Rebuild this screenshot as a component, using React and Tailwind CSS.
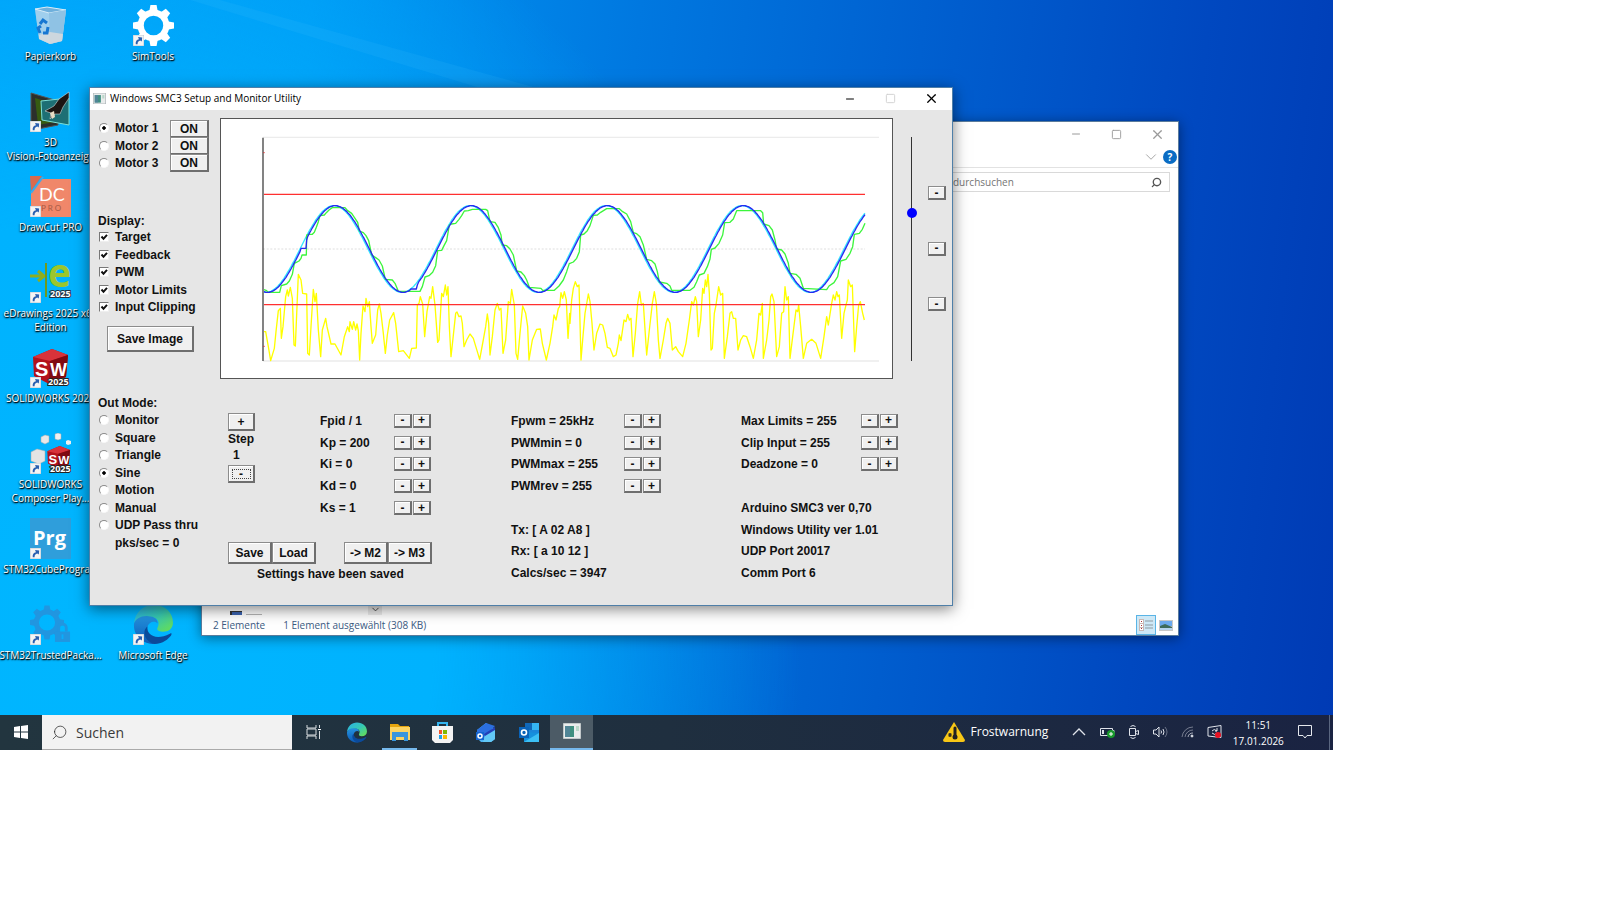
import { useState } from 'react';
import { ChevronDown, Minus, Search, Square, X } from 'lucide-react';

const PERIOD = 408;

// Plot units are thirds of a pixel: x 0..1890, y 0..545
const sinePath = (delay, from, to) => {
  const points = [];
  for (let x = from; x <= to; x += 3) {
    const y = 207 - 130 * Math.cos(((x - delay - 648) / PERIOD) * 2 * Math.PI);
    points.push(`${x},${y.toFixed(0)}`);
  }
  return points.join(' ');
};

const TARGET = sinePath(-3, 27, 1830);
const FEEDBACK = `${sinePath(1, 27, 135)} 138,205 153,205 155,180 ${sinePath(1, 158, 465)} 468,327 484,327 487,315 ${sinePath(1, 492, 1830)}`;

const shift = (points, dx) =>
  points
    .split(' ')
    .map((p) => {
      const [x, y] = p.split(',');
      return `${Number(x) + dx},${y}`;
    })
    .join(' ');

const MOTOR_A =
  '27,329 33,331 40,337 74,337 79,317 95,312 103,303 112,283 118,250 124,247 132,243 138,235 141,225 154,225 155,165 160,163 172,163 178,157 184,142 190,125 195,107 208,105 214,98 222,90 232,83 270,83 278,92 290,100 298,112 308,127 313,153 325,158 333,167 341,182 350,225 362,233 372,240 382,258 391,298 412,300 420,310 430,334 495,334 502,320 510,291 522,287 533,277 542,257 548,212 560,211 567,197 575,182 583,135 590,132 602,130 612,118 620,107 628,93 640,92 652,88 692,88 698,92 705,125 720,127 730,143 738,165 742,195 755,197 765,207 775,225 785,273 798,276 808,287 815,300 823,322 858,325 863,331 898,331 912,318 925,300 935,275 943,250';
const MOTOR_B =
  '0,250 10,246 20,235 28,215 32,165 42,162 52,152 60,137 70,106 82,105 92,97 110,86 148,86 158,95 170,102 182,125 190,158 200,161 210,170 220,195 230,238 245,242 255,252 262,275 268,306 290,310 300,318 305,331 360,331 372,322 380,305 388,285 402,280 412,260 420,237 424,208 435,204 447,190 458,165 464,128 480,127 490,117 500,92 572,92 578,98 581,132 597,137 607,150 615,180 620,207 635,210 645,222 655,250 660,280 678,283 690,295 700,325 770,329 777,318 792,308 803,290 812,243 828,238 840,220 848,200 853,163 868,160 877,148 885,130';
const PWM_A =
  '27,455 32,455 40,500 47,542 58,505 63,455 70,392 76,385 79,475 84,440 92,350 97,330 100,348 106,322 112,355 117,495 121,498 126,380 130,283 138,300 143,340 155,342 158,520 163,525 168,440 175,328 180,365 184,340 190,450 197,530 202,450 212,415 216,440 228,492 240,492 258,525 268,470 278,440 283,455 285,425 292,448 296,425 302,450 306,432 310,452 314,540 318,460 324,378 330,395 333,355 338,380 343,365 348,440 352,490 362,465 368,390 373,372 378,400 385,460 391,520 397,465 404,420 416,398 422,430 431,515 445,512 463,535 470,505 484,504 487,375 492,370 496,350 503,372 509,470 516,395 524,350 528,355 533,320 540,375 548,487 552,480 560,340 565,350 571,315 575,345 579,320 583,440 588,530 594,475 602,400 606,396 612,410 618,408 622,430 627,500 635,480 645,462 655,475 674,538 683,490 692,440 697,402 701,430 705,525 712,470 720,390 727,370 733,390 738,385 744,520 752,480 760,365 766,370 770,328 778,375 783,520 788,538 795,460 803,378 812,400 818,440 822,540 832,480 845,448 856,447 862,490 874,540 885,490 893,440 897,405 903,420 910,385 914,380 918,338 923,355 928,335 934,360 939,475 944,400';
const PWM_B =
  '0,430 5,360 10,325 16,305 22,320 27,315 33,540 38,480 45,400 55,342 60,365 66,430 72,510 80,460 90,432 98,435 105,460 112,502 120,505 130,530 138,525 145,490 148,465 153,482 162,420 168,425 173,403 178,420 183,415 189,530 196,460 203,370 209,335 214,375 220,370 230,525 238,450 247,370 253,335 259,370 265,480 270,535 280,480 288,430 293,415 300,430 307,510 317,500 325,515 338,530 348,490 358,420 365,365 370,375 376,350 380,365 385,470 392,420 398,325 402,340 406,300 410,320 414,283 418,340 423,510 427,505 433,400 438,375 446,320 452,345 458,340 463,535 472,470 480,400 485,395 490,415 497,415 504,510 512,480 520,467 530,470 540,500 550,535 560,480 567,400 572,405 577,370 580,535 590,480 597,420 602,350 606,342 612,365 620,530 628,500 635,400 641,395 645,320 650,360 655,350 660,535 668,470 678,390 683,395 686,375 692,440 700,535 710,490 725,478 738,490 752,535 762,470 770,410 775,435 785,370 790,345 795,360 800,335 804,350 808,345 815,475 822,400 828,375 832,360 835,300 842,320 847,315 854,515 860,440 866,375 871,365 878,400 883,420';

const MOTOR = `${MOTOR_A} ${shift(MOTOR_B, 945)}`;
const PWM = `${PWM_A} ${shift(PWM_B, 945)}`;

const BTN =
  'border border-r-2 border-b-2 border-t-[#8c8c8c] border-l-[#8c8c8c] border-r-[#6e6e6e] border-b-[#6e6e6e] bg-[#f0f0f0] shadow-[inset_1px_1px_0_#ffffff] flex items-center justify-center';

const Chart = () => (
  <svg viewBox="-102 -183 2013 780" className="block w-full" fill="none" strokeLinejoin="round">
    <path d="M24 -128H1872M24 543H1872" stroke="#ececec" strokeWidth="4" />
    <path d="M24 207H1830" stroke="#dedede" strokeWidth="3" strokeDasharray="6 5" />
    <polyline points={PWM} stroke="#ffff00" strokeWidth="4" />
    <path d="M27 43H1830M27 374H1830" stroke="#ff3030" strokeWidth="4" />
    <polyline points={TARGET} stroke="#30e8ff" strokeWidth="4" />
    <polyline points={MOTOR} stroke="#3cf53c" strokeWidth="4" />
    <polyline points={FEEDBACK} stroke="#2828f0" strokeWidth="4" />
    <path d="M24 -127V543" stroke="#444" strokeWidth="4" />
    <path d="M25 -82h4M25 499h4" stroke="#d33" strokeWidth="3" />
  </svg>
);

const ShortcutArrow = () => (
  <svg viewBox="0 0 12 12" className="absolute bottom-0 left-0 w-[11px] h-[11px]">
    <rect width="12" height="12" fill="#f4f4f4" stroke="#b8c4d0" />
    <path d="M3 10C2.6 7 4 5 6.500 4.600L5.500 2.200 10 2.600 9.600 7 8 6C6 6.400 4.800 7.800 5 10z" fill="#2a5fb0" />
  </svg>
);

const RecycleIcon = () => (
  <svg viewBox="0 0 41 41">
    <path d="M5 4l12-2 19 3-4 31-12 3-11-5z" fill="#8fc3e6" opacity=".85" />
    <path d="M5 4l14 4 17-3-4 31-12 3-11-5z" fill="#a9d3ee" opacity=".8" />
    <path d="M5 4l12-2 19 3-17 3z" fill="#6fb0dc" stroke="#d9edf8" />
    <path d="M19 8l1 31 12-3 4-31z" fill="#8fc2e4" />
    <path d="M9 30l11-3 13 2-1 7-12 3-11-5z" fill="#dcdcdc" opacity=".8" />
    <path d="M10 19l3-4 4 3M18 22l-1 6-4 0M10 28l-2-5 3-2" fill="none" stroke="#1677d2" strokeWidth="3" />
  </svg>
);

const Gear = ({ color, className }) => (
  <svg viewBox="0 0 40 40" className={className}>
    <g fill={color}>
      {[0, 45, 90, 135, 180, 225, 270, 315].map((a) => (
        <path key={a} d="M15.500 8L17 0h6l1.500 8z" transform={`rotate(${a} 20 20)`} />
      ))}
    </g>
    <circle cx="20" cy="20" r="12.500" fill="none" stroke={color} strokeWidth="6" />
  </svg>
);

const VisionIcon = () => (
  <svg viewBox="0 0 41 41">
    <path d="M1 2l27 8v24L8 38 1 33z" fill="#2b2f2c" stroke="#555" />
    <path d="M5 7l20 6v18L8 34z" fill="#365b12" />
    <path d="M11 10l28-3v27l-27-5z" fill="#1d6f74" stroke="#7de0d8" />
    <path d="M39 1L29 8l-5 7-9 5 6 2-1 6 5-5 5 0 3-7 6-9z" fill="#1c1512" stroke="#eee" strokeWidth=".5" />
    <path d="M20 22l4-2 1 6-3 2z" fill="#e8dcc4" />
  </svg>
);

const DrawCutIcon = () => (
  <svg viewBox="0 0 41 41">
    <path d="M12 3h29v38H1V16z" fill="#f0876a" />
    <path d="M0 0h12L1 15z" fill="#d96a4e" />
    <path d="M13 1L1 17" stroke="#3fa9e8" strokeWidth="2" />
    <text x="9" y="25" fontSize="18" fill="#fff" fontFamily="Lato">DC</text>
    <text x="11" y="35" fontSize="8" fill="#a55a45" fontFamily="Lato">P R O</text>
  </svg>
);

const EDrawingsIcon = () => (
  <svg viewBox="0 0 41 41" className="overflow-visible">
    <path d="M0 14h12M8 9l6 5-6 5" fill="none" stroke="#8fae1e" strokeWidth="3" />
    <path d="M16 1v34" stroke="#6f9a1c" strokeWidth="2" />
    <text x="18" y="25" fontSize="39" fontWeight="bold" fill="#9cc62c" fontFamily="Open Sans">e</text>
    <text x="20" y="35" fontSize="9" fontWeight="bold" fill="#fff" stroke="#234" strokeWidth="2" paintOrder="stroke" fontFamily="Open Sans">2025</text>
  </svg>
);

const Cube = () => (
  <>
    <path d="M2 8L21 0l16 6-2 22-17 7L3 27z" fill="#b3121b" />
    <path d="M2 8L21 0l16 6-18 6z" fill="#d8333a" />
    <path d="M19 12L37 6l-2 22-17 7z" fill="#7f0a11" />
    <text x="4" y="27" fontSize="20" fontWeight="bold" fill="#fff" fontFamily="Liberation Sans">S</text>
    <text x="19" y="27" fontSize="18" fontWeight="bold" fill="#fff" fontFamily="Liberation Sans">W</text>
  </>
);

const SolidworksIcon = () => (
  <svg viewBox="0 0 41 41">
    <g transform="translate(1 2)"><Cube /></g>
    <text x="18" y="38" fontSize="9" fontWeight="bold" fill="#fff" stroke="#222" strokeWidth="2" paintOrder="stroke" fontFamily="Open Sans">2025</text>
  </svg>
);

const ComposerIcon = () => (
  <svg viewBox="0 0 41 41">
    <path d="M1 19l6-3 8 2v10l-6 3-8-3z" fill="#e4e4e4" stroke="#aaa" strokeWidth=".5" />
    <path d="M11 4l4-2 4 1v6l-4 2-4-2z" fill="#e8e8e8" stroke="#aaa" strokeWidth=".5" />
    <path d="M25 1l3-1 3 1v5l-3 1-3-1z" fill="#f0f0f0" stroke="#aaa" strokeWidth=".5" />
    <path d="M36 8l2-1 3 1v3l-3 1-2-1z" fill="#eee" />
    <g transform="translate(16 13) scale(.65)"><Cube /></g>
    <text x="20" y="39" fontSize="9" fontWeight="bold" fill="#fff" stroke="#222" strokeWidth="2" paintOrder="stroke" fontFamily="Open Sans">2025</text>
  </svg>
);

const PrgIcon = () => (
  <svg viewBox="0 0 41 41">
    <path d="M0 0h41v41H0z" fill="#2f9edb" />
    <text x="3" y="27" fontSize="20" fontWeight="bold" fill="#fff" fontFamily="Open Sans">Prg</text>
  </svg>
);

const TrustedIcon = () => (
  <>
    <Gear color="#2196e0" className="w-[34px] h-[37px]" />
    <svg viewBox="0 0 18 22" className="absolute right-0 bottom-[2px] w-[17px] h-[21px]">
      <path d="M1 10h16v11H1z" fill="#2196e0" />
      <path d="M5 10V6a4 4 0 0 1 8 0v4" fill="none" stroke="#2196e0" strokeWidth="3" />
      <path d="M9 13v5" stroke="#0aaefb" strokeWidth="2" />
    </svg>
  </>
);

const EdgeIcon = ({ id, className }) => (
  <svg viewBox="0 0 40 40" className={className}>
    <defs>
      <linearGradient id={`${id}a`} x1="0" y1="0" x2="1" y2="1">
        <stop offset="0" stopColor="#2bb0e8" />
        <stop offset=".5" stopColor="#35c8b4" />
        <stop offset="1" stopColor="#6be04c" />
      </linearGradient>
      <linearGradient id={`${id}b`} x1="0" y1="0" x2="0" y2="1">
        <stop offset="0" stopColor="#2493df" />
        <stop offset="1" stopColor="#0d5ab5" />
      </linearGradient>
    </defs>
    <path d="M1 19C2 8 10 1 20 1c11 0 19 7 19 17 0 6-4 9-10 9-5 0-6-2-5-4 3-6-1-10-7-10C9 13 3 15 1 19z" fill={`url(#${id}a)`} />
    <path d="M1 19c2-5 8-8 14-7 6 0 9 3 9 7-2-3-9-2-10 4-1 8 7 13 19 9-4 6-10 7-14 7C8 38 0 30 1 19z" fill={`url(#${id}b)`} />
    <path d="M14 22c-1 8 8 14 22 7 2-1 2 0 1 2-5 6-11 8-16 8-9-2-13-12-7-17z" fill="#0b4a9a" />
  </svg>
);

const SHORTCUTS = [
  { lines: ['Papierkorb'], icon: <RecycleIcon />, plain: true },
  { lines: ['SimTools'], icon: <Gear color="#ffffff" className="w-[41px] h-[41px]" /> },
  { lines: ['3D', 'Vision-Fotoanzeige'], icon: <VisionIcon />, left: true },
  { lines: ['DrawCut PRO'], icon: <DrawCutIcon />, left: true },
  { lines: ['eDrawings 2025 x64', 'Edition'], icon: <EDrawingsIcon />, left: true },
  { lines: ['SOLIDWORKS 2025'], icon: <SolidworksIcon />, left: true },
  { lines: ['SOLIDWORKS', 'Composer Play...'], icon: <ComposerIcon />, left: true },
  { lines: ['STM32CubeProgra...'], icon: <PrgIcon />, left: true },
  { lines: ['STM32TrustedPacka...'], icon: <TrustedIcon />, left: true },
  { lines: ['Microsoft Edge'], icon: <EdgeIcon id="desk" className="w-[41px] h-[41px]" /> },
];

const Shortcut = ({ item }) => (
  <button type="button" className={`flex flex-col items-center pt-[5px] ${item.left ? 'col-start-1' : ''}`}>
    <span className="relative w-[41px] h-[41px]">
      {item.icon}
      {!item.plain && <ShortcutArrow />}
    </span>
    <span className="mt-[3px] text-[10px] leading-[14px] text-white whitespace-nowrap [text-shadow:0_1px_2px_#000,1px_1px_1px_#000]">
      {item.lines.map((l) => (
        <span key={l} className="block">{l}</span>
      ))}
    </span>
  </button>
);

const AppIcon = ({ className }) => (
  <svg viewBox="0 0 18 16" className={className}>
    <path d="M0 0h18v16H0z" fill="#e9ecec" stroke="#9aa5a8" />
    <path d="M2 3h9v11H2z" fill="#3f8f80" />
    <path d="M2 3h5v11H2z" fill="#5b7fa5" opacity=".6" />
    <path d="M13 3h3v5h-3z" fill="#b9d7c8" />
  </svg>
);

const ExplorerWindow = () => (
  <section className="absolute left-[201px] top-[121px] w-[978px] h-[515px] flex flex-col bg-white border border-[#5b7c9c] shadow-[0_2px_12px_rgba(0,0,0,0.45)]">
    <div className="flex justify-end h-6 text-[#9a9a9a]">
      <button type="button" aria-label="Minimieren" className="w-[41px] flex items-center justify-center"><Minus size={12} strokeWidth={2} /></button>
      <button type="button" aria-label="Maximieren" className="w-[41px] flex items-center justify-center"><Square size={11} strokeWidth={2} /></button>
      <button type="button" aria-label="Schließen" className="w-[41px] flex items-center justify-center"><X size={15} strokeWidth={2} /></button>
    </div>
    <div className="flex justify-end items-center gap-[3px] h-[22px] pr-px border-b border-[#e2e2e2]">
      <ChevronDown size={18} strokeWidth={1} className="text-[#8a8a8a]" />
      <button type="button" className="w-[14px] h-[14px] rounded-full bg-[#0a6cc4] text-white text-[10px] leading-[14px] font-bold">?</button>
    </div>
    <div className="flex justify-end pr-2 pt-1">
      <div className="flex items-center w-[240px] h-5 border border-[#d9d9d9] pl-[22px] pr-[7px]">
        <input aria-label="durchsuchen" placeholder="durchsuchen" className="flex-1 min-w-0 text-[10px] placeholder:text-[#757575] outline-none" />
        <Search size={11} strokeWidth={3} className="text-[#555] -scale-x-100" />
      </div>
    </div>
    <div className="flex-1" />
    <div className="flex items-end h-3 pl-7 gap-[106px]">
      <div className="flex items-end gap-1">
        <span className="w-[12px] h-1 bg-[#3b63b0] border-t border-l-2 border-[#333]" />
        <span className="w-4 h-px bg-[#b5b5b5]" />
      </div>
      <span className="w-[14px] h-3 bg-[#ececec] flex items-center justify-center"><ChevronDown size={11} className="text-[#444]" /></span>
    </div>
    <footer className="flex items-center h-5 pl-[11px] pr-[5px] text-[10px] text-[#3b5a82]">
      <span>2 Elemente</span>
      <span className="ml-[18px]">1 Element ausgewählt (308 KB)</span>
      <span className="flex-1" />
      <button type="button" aria-label="Details" className="w-5 h-5 border border-[#5ab4e6] bg-[#cde8f6] flex items-center justify-center">
        <svg viewBox="0 0 14 12" className="w-[14px] h-3">
          <path d="M0 0h5v12H0z" fill="#c9b9b5" />
          <path d="M1 1h3v3H1zM1 5h3v3H1zM1 9h3v2H1z" fill="#fff" />
          <path d="M2 2h1v1H2zM2 6h1v1H2zM2 9h1v1H2z" fill="#a33" />
          <path d="M6 2h8M6 6h8M6 9h8" stroke="#8f9aa0" />
        </svg>
      </button>
      <button type="button" aria-label="Vorschau" className="ml-[3px] w-[14px] h-5 flex items-center">
        <svg viewBox="0 0 14 11" className="w-[14px] h-[11px]">
          <path d="M0 0h14v11H0z" fill="#c8c8c8" />
          <path d="M1 1h12v5H1z" fill="#6aa9ee" />
          <path d="M1 6l5-2 7 3v3H1z" fill="#3d6b5c" />
          <path d="M1 8h12v2H1z" fill="#b6d3ee" />
        </svg>
      </button>
    </footer>
  </section>
);

const Radio = ({ name, label, checked, onChange }) => (
  <label className="flex items-center gap-[6px] pl-px leading-[16px]">
    <input
      type="radio"
      name={name}
      checked={checked}
      onChange={onChange}
      className="appearance-none w-[10px] h-[10px] rounded-full bg-white border border-t-[#8a8a8a] border-l-[#8a8a8a] border-r-[#f8f8f8] border-b-[#f8f8f8] checked:bg-[radial-gradient(circle,#000_25%,#fff_38%)]"
    />
    {label}
  </label>
);

const Check = ({ label }) => (
  <label className="flex items-center gap-[6px] pl-px leading-[16px]">
    <span className="grid w-[10px] h-[10px]">
      <input
        type="checkbox"
        defaultChecked
        className="peer appearance-none [grid-area:1/1] w-[10px] h-[10px] bg-white border border-t-[#777] border-l-[#777] border-r-[#eee] border-b-[#eee]"
      />
      <svg viewBox="0 0 10 10" className="[grid-area:1/1] w-[10px] h-[10px] z-10 invisible peer-checked:visible pointer-events-none">
        <path d="M2.500 4.500L4.500 6.800 8 2.800" fill="none" stroke="#111" strokeWidth="2" />
      </svg>
    </span>
    {label}
  </label>
);

const Stepper = ({ name }) => (
  <span className="flex gap-px">
    <button type="button" aria-label={`${name} minus`} className={`${BTN} w-[18px] h-[14px] leading-[10px]`}>-</button>
    <button type="button" aria-label={`${name} plus`} className={`${BTN} w-[18px] h-[14px] leading-[10px]`}>+</button>
  </span>
);

const Param = ({ text, className }) => (
  <div className={`flex items-center justify-between ${className}`}>
    <span>{text}</span>
    <Stepper name={text} />
  </div>
);

const Line = ({ children }) => <div className="flex items-center">{children}</div>;

const MotorWindow = () => {
  const [motor, setMotor] = useState(1);
  const [mode, setMode] = useState('Sine');
  const [position, setPosition] = useState(170);

  return (
    <section className="absolute left-[89px] top-[87px] w-[864px] h-[519px] flex flex-col bg-[#e6e6e6] border border-[#4f7fa8] shadow-[0_3px_14px_rgba(0,0,0,0.5)]">
      <header className="flex items-center h-[22px] pl-[3px] pb-px bg-white text-[10px] text-black">
        <AppIcon className="w-[13px] h-[11px]" />
        <h1 className="ml-1 flex-1">Windows SMC3 Setup and Monitor Utility</h1>
        <button type="button" aria-label="Minimize" className="w-[41px] flex justify-center"><Minus size={12} strokeWidth={2} /></button>
        <button type="button" aria-label="Maximize" className="w-[41px] flex justify-center text-[#d0d0d0]"><Square size={11} strokeWidth={2} /></button>
        <button type="button" aria-label="Close" className="w-[41px] flex justify-center"><X size={15} strokeWidth={2} /></button>
      </header>

      <div className="flex-1 flex font-['Liberation_Sans',sans-serif] font-bold text-[12px] text-[#111]">
        <div className="w-[130px] pl-2 pt-[10px] flex flex-col">
          <div className="flex justify-between pr-[11px]">
            <div className="flex flex-col justify-between">
              {[1, 2, 3].map((n) => (
                <Radio key={n} name="motor" label={`Motor ${n}`} checked={motor === n} onChange={() => setMotor(n)} />
              ))}
            </div>
            <div className="flex flex-col">
              {[1, 2, 3].map((n) => (
                <button key={n} type="button" className={`${BTN} w-[39px] h-[18px] -mb-px`}>ON</button>
              ))}
            </div>
          </div>

          <fieldset className="mt-[42px]">
            <legend className="leading-[16px]">Display:</legend>
            <div className="flex flex-col justify-between h-[86px]">
              {['Target', 'Feedback', 'PWM', 'Motor Limits', 'Input Clipping'].map((l) => (
                <Check key={l} label={l} />
              ))}
            </div>
          </fieldset>
          <button type="button" className={`${BTN} mt-[11px] ml-[9px] w-[87px] h-[26px]`}>Save Image</button>

          <fieldset className="mt-[43px]">
            <legend className="leading-[16px]">Out Mode:</legend>
            <div className="flex flex-col justify-between h-[121px] mt-px">
              {['Monitor', 'Square', 'Triangle', 'Sine', 'Motion', 'Manual', 'UDP Pass thru'].map((l) => (
                <Radio key={l} name="mode" label={l} checked={mode === l} onChange={() => setMode(l)} />
              ))}
            </div>
          </fieldset>
          <p className="pl-[17px] mt-[2px] leading-[16px]">pks/sec = 0</p>
        </div>

        <div className="flex-1 flex flex-col pt-2">
          <div className="flex">
            <div className="flex-1 h-[261px] border border-[#555] bg-white overflow-hidden">
              <Chart />
            </div>
            <div className="w-[59px] flex justify-between pl-[14px] pr-[6px]">
              <input
                type="range"
                aria-label="Position"
                min="0"
                max="255"
                value={position}
                onChange={(e) => setPosition(Number(e.target.value))}
                className="appearance-none mt-[19px] w-[10px] h-[224px] [writing-mode:vertical-lr] [direction:rtl] bg-[linear-gradient(90deg,transparent_4px,#333_4px,#333_5px,transparent_5px)] [&::-webkit-slider-thumb]:appearance-none [&::-webkit-slider-thumb]:w-[10px] [&::-webkit-slider-thumb]:h-[10px] [&::-webkit-slider-thumb]:rounded-full [&::-webkit-slider-thumb]:bg-[#0000ff]"
              />
              <div className="flex flex-col justify-between h-[125px] mt-[68px]">
                {['Upper', 'Center', 'Lower'].map((n) => (
                  <button key={n} type="button" aria-label={n} className={`${BTN} w-[18px] h-[14px] leading-[10px]`}>-</button>
                ))}
              </div>
            </div>
          </div>

          <div className="flex mt-[31px] h-[174px]">
            <div className="w-[291px] pl-2 flex flex-col justify-between">
              <div className="flex">
                <div className="w-[92px] pt-[3px] flex flex-col items-start">
                  <button type="button" aria-label="Step plus" className={`${BTN} w-[27px] h-[18px]`}>+</button>
                  <span className="leading-[16px]">Step</span>
                  <span className="pl-[5px] leading-[16px]">1</span>
                  <button type="button" aria-label="Step minus" className={`${BTN} mt-[2px] w-[27px] h-[18px]`}>
                    <span className="w-[19px] border border-dotted border-[#444] leading-[8px]">-</span>
                  </button>
                </div>
                <div className="w-[111px] h-[109px] grid grid-rows-5">
                  {['Fpid / 1', 'Kp = 200', 'Ki = 0', 'Kd = 0', 'Ks = 1'].map((t) => (
                    <Param key={t} text={t} className="w-[111px]" />
                  ))}
                </div>
              </div>
              <div>
                <div className="flex">
                  <button type="button" className={`${BTN} w-[44px] h-[22px]`}>Save</button>
                  <button type="button" className={`${BTN} w-[44px] h-[22px]`}>Load</button>
                  <button type="button" className={`${BTN} ml-7 w-[44px] h-[22px]`}>-&gt; M2</button>
                  <button type="button" className={`${BTN} w-[44px] h-[22px]`}>-&gt; M3</button>
                </div>
                <p className="pl-[29px] leading-[20px]">Settings have been saved</p>
              </div>
            </div>
            <div className="w-[230px] grid grid-rows-8">
              {['Fpwm = 25kHz', 'PWMmin = 0', 'PWMmax = 255', 'PWMrev = 255'].map((t) => (
                <Param key={t} text={t} className="w-[150px]" />
              ))}
              <span />
              <Line>Tx: [ A 02 A8 ]</Line>
              <Line>Rx: [ a 10 12 ]</Line>
              <Line>Calcs/sec = 3947</Line>
            </div>
            <div className="flex-1 grid grid-rows-8">
              {['Max Limits = 255', 'Clip Input = 255', 'Deadzone = 0'].map((t) => (
                <Param key={t} text={t} className="w-[157px]" />
              ))}
              <span />
              <Line>Arduino SMC3 ver 0,70</Line>
              <Line>Windows Utility ver 1.01</Line>
              <Line>UDP Port 20017</Line>
              <Line>Comm Port 6</Line>
            </div>
          </div>
        </div>
      </div>
    </section>
  );
};

const Taskbar = () => (
  <footer className="relative mt-auto flex items-stretch h-[35px] bg-linear-to-r from-[#22353f] via-[#1f2f3f] to-[#1a2342] text-white">
    <button type="button" aria-label="Start" className="w-[42px] flex items-center justify-center">
      <svg viewBox="0 0 14 14" className="w-[14px] h-[14px]" fill="#fff">
        <path d="M0 2l6-1v5.500H0zM7 1l7-1v6.500H7zM0 7.500h6V13l-6-1zM7 7.500h7V14l-7-1z" />
      </svg>
    </button>
    <label className="flex items-center w-[250px] bg-[#f2f2f2] border-b border-[#aaa] pl-[9px] pt-px text-[#222]">
      <Search size={17} strokeWidth={1} className="-scale-x-100" />
      <input aria-label="Suchen" placeholder="Suchen" className="ml-2 w-40 text-[14px] placeholder:text-[#3a3a3a] outline-none" />
    </label>
    <button type="button" aria-label="Taskansicht" className="w-[43px] flex items-center justify-center">
      <svg viewBox="0 0 16 14" className="w-4 h-[14px]" fill="none" stroke="#d8dde0">
        <path d="M1 0v3h9V0M1 14v-3h9v3M1 4h9v6H1zM13.500 0v3M13.500 6v8" />
        <path d="M12 4h3v1h-3z" fill="#fff" stroke="none" />
      </svg>
    </button>
    <button type="button" aria-label="Edge" className="w-[43px] flex items-center justify-center">
      <EdgeIcon id="bar" className="w-[22px] h-[21px]" />
    </button>
    <button type="button" aria-label="Explorer" className="w-[43px] px-1 flex flex-col items-center justify-between">
      <svg viewBox="0 0 20 17" className="mt-[9px] w-5 h-[17px]">
        <path d="M0 0h8l2 2h9v5H0z" fill="#e5a50e" />
        <path d="M0 3h20v13H0z" fill="#fcd462" />
        <path d="M2 8h16v9h-4v-4H6v4H2z" fill="#3a96dd" />
      </svg>
      <span className="w-full h-[2px] bg-[#76b9ed]" />
    </button>
    <button type="button" aria-label="Store" className="w-[43px] flex items-center justify-center">
      <svg viewBox="0 0 21 21" className="w-[21px] h-[21px]">
        <path d="M6 6V1h9v5" fill="none" stroke="#35b5f0" strokeWidth="2" />
        <path d="M0 4h21v14l-3 3H3l-3-3z" fill="#f3f3f3" />
        <path d="M7 8h3v4H7z" fill="#f0552b" />
        <path d="M11 8h4v4h-4z" fill="#7eb900" />
        <path d="M7 13h3v4H7z" fill="#1ea0e8" />
        <path d="M11 13h4v4h-4z" fill="#fbb800" />
      </svg>
    </button>
    <button type="button" aria-label="Outlook neu" className="w-[43px] flex items-center justify-center">
      <svg viewBox="0 0 20 20" className="w-5 h-5">
        <path d="M1 8L10 1l9 6v10l-4 3H5l-4-4z" fill="#4db4f4" />
        <path d="M1 8L10 1l9 3-9 9-9 2z" fill="#2b6fe0" />
        <path d="M8 12l11-7v5l-9 9z" fill="#2340b8" />
        <path d="M9 14l10-6v9l-4 3H7z" fill="#62c8f6" />
        <path d="M0 10h8v8H0z" fill="#1464cf" />
        <circle cx="4" cy="14" r="2" fill="none" stroke="#fff" strokeWidth="1.500" />
      </svg>
    </button>
    <button type="button" aria-label="Outlook" className="w-[43px] flex items-center justify-center">
      <svg viewBox="0 0 20 19" className="w-5 h-[19px]">
        <path d="M6 0h14v13H6z" fill="#1a86d9" />
        <path d="M13 0h7v7h-7z" fill="#35b5f2" />
        <path d="M6 0h7v7H6z" fill="#1068b8" />
        <path d="M5 9l15 1v9H5z" fill="#1590dd" />
        <path d="M5 19l15-9v9z" fill="#3cc0f5" />
        <path d="M0 4h10v11H0z" fill="#0a63b8" />
        <circle cx="5" cy="9.500" r="2.500" fill="none" stroke="#fff" strokeWidth="1.600" />
      </svg>
    </button>
    <button type="button" aria-label="SMC3 Utility" className="w-[43px] flex items-center justify-center bg-[#4c5b66] border-b-2 border-[#76b9ed]">
      <AppIcon className="w-[18px] h-4" />
    </button>
    <span className="flex-1" />
    <button type="button" className="flex items-center gap-[6px] text-[12px]">
      <svg viewBox="0 0 22 20" className="w-[22px] h-5">
        <path d="M11 0L22 18q0 2-2 2H2q-2 0-2-2z" fill="#f8c716" />
        <path d="M12 6v8" stroke="#222" strokeWidth="3" strokeLinecap="round" />
        <circle cx="12" cy="15" r="2.500" fill="#222" />
        <path d="M5 13h4M6 11l2 4M8 11l-2 4" stroke="#222" />
      </svg>
      Frostwarnung
    </button>
    <div className="flex items-center pl-[23px] pr-[3px] gap-[13px] text-[#dfe3ea]">
      <svg viewBox="0 0 16 8" className="w-4 h-2" fill="none" stroke="currentColor">
        <path d="M2 7l6-6 6 6" strokeWidth="1.300" />
      </svg>
      <svg viewBox="0 0 15 12" className="w-[15px] h-3" fill="none">
        <path d="M.5 2.500h12v7H.5zM13 4.500h1v3h-1" stroke="#dfe3ea" />
        <path d="M2 4h2v4H2z" fill="#dfe3ea" />
        <circle cx="11" cy="8" r="4" fill="#17982b" />
        <path d="M11 6v4M9 8h4" stroke="#fff" />
      </svg>
      <svg viewBox="0 0 12 14" className="w-3 h-[14px]" fill="none" stroke="currentColor">
        <path d="M1.500 3.500h6v7h-6zM7.500 6.500l3-1v4l-3-1M2.500 1.500q2.500-2 5 0M2.500 12.500q2.500 2 5 0" />
      </svg>
      <svg viewBox="0 0 15 12" className="w-[15px] h-3" fill="none" stroke="currentColor">
        <path d="M.5 4h2.500l3-3v10L3 8H.5zM8 4.500q1 1.500 0 3M10 3q2 3 0 6" />
        <path d="M12 1q4 5 0 10" opacity=".4" />
      </svg>
      <svg viewBox="0 0 13 12" className="w-[13px] h-3" fill="none" stroke="currentColor">
        <path d="M1 11A11 11 0 0 1 12 1M4 11a8 8 0 0 1 8-7" opacity=".45" />
        <path d="M7 11a5 5 0 0 1 5-4" opacity=".7" />
        <circle cx="11" cy="10" r="1" fill="currentColor" />
      </svg>
      <svg viewBox="0 0 15 14" className="w-[15px] h-[14px]" fill="none" stroke="currentColor">
        <path d="M1 2.500L14 .5v12L1 11z" />
        <path d="M5 6q2-3 5 0M10 3v3H8M10 8q-2 3-5 0" />
        <circle cx="11" cy="10" r="3" fill="#e81123" stroke="none" />
      </svg>
    </div>
    <div className="w-[66px] pt-px flex flex-col justify-center text-center text-[10px] leading-[16px]">
      <span>11:51</span>
      <span>17.01.2026</span>
    </div>
    <button type="button" aria-label="Benachrichtigungen" className="w-[28px] mr-[10px] flex items-center justify-center">
      <svg viewBox="0 0 14 14" className="w-[14px] h-[14px]" fill="none" stroke="#e6e9ee">
        <path d="M.5.5h13v10H9l-2 2.500-2-2.500H.5z" />
      </svg>
    </button>
    <span className="w-1 border-l border-[#5a6680]" />
  </footer>
);

const App = () => (
  <div className="min-h-screen bg-white font-['Open_Sans',sans-serif]">
    <main className="relative w-5/6 aspect-video flex flex-col overflow-hidden bg-[radial-gradient(ellipse_55%_110%_at_5%_85%,#00b6ff_0%,#00b2fe_50%,#00aafa00_100%),linear-gradient(97deg,#009ef8_0%,#0098f4_22%,#0078e0_45%,#0060d0_65%,#0048c0_85%,#003ab4_100%)]">
      <svg viewBox="0 0 400 100" className="absolute left-[180px] top-0 w-[400px]">
        <path d="M10 0l330 100h60L40 0z" fill="#4cc4ff" opacity=".12" />
      </svg>
      <nav className="absolute left-0 top-0 grid grid-cols-[101px_104px] grid-rows-8 h-[684px]">
        {SHORTCUTS.map((s) => (
          <Shortcut key={s.lines.join()} item={s} />
        ))}
      </nav>
      <ExplorerWindow />
      <MotorWindow />
      <Taskbar />
    </main>
  </div>
);

export default App;
